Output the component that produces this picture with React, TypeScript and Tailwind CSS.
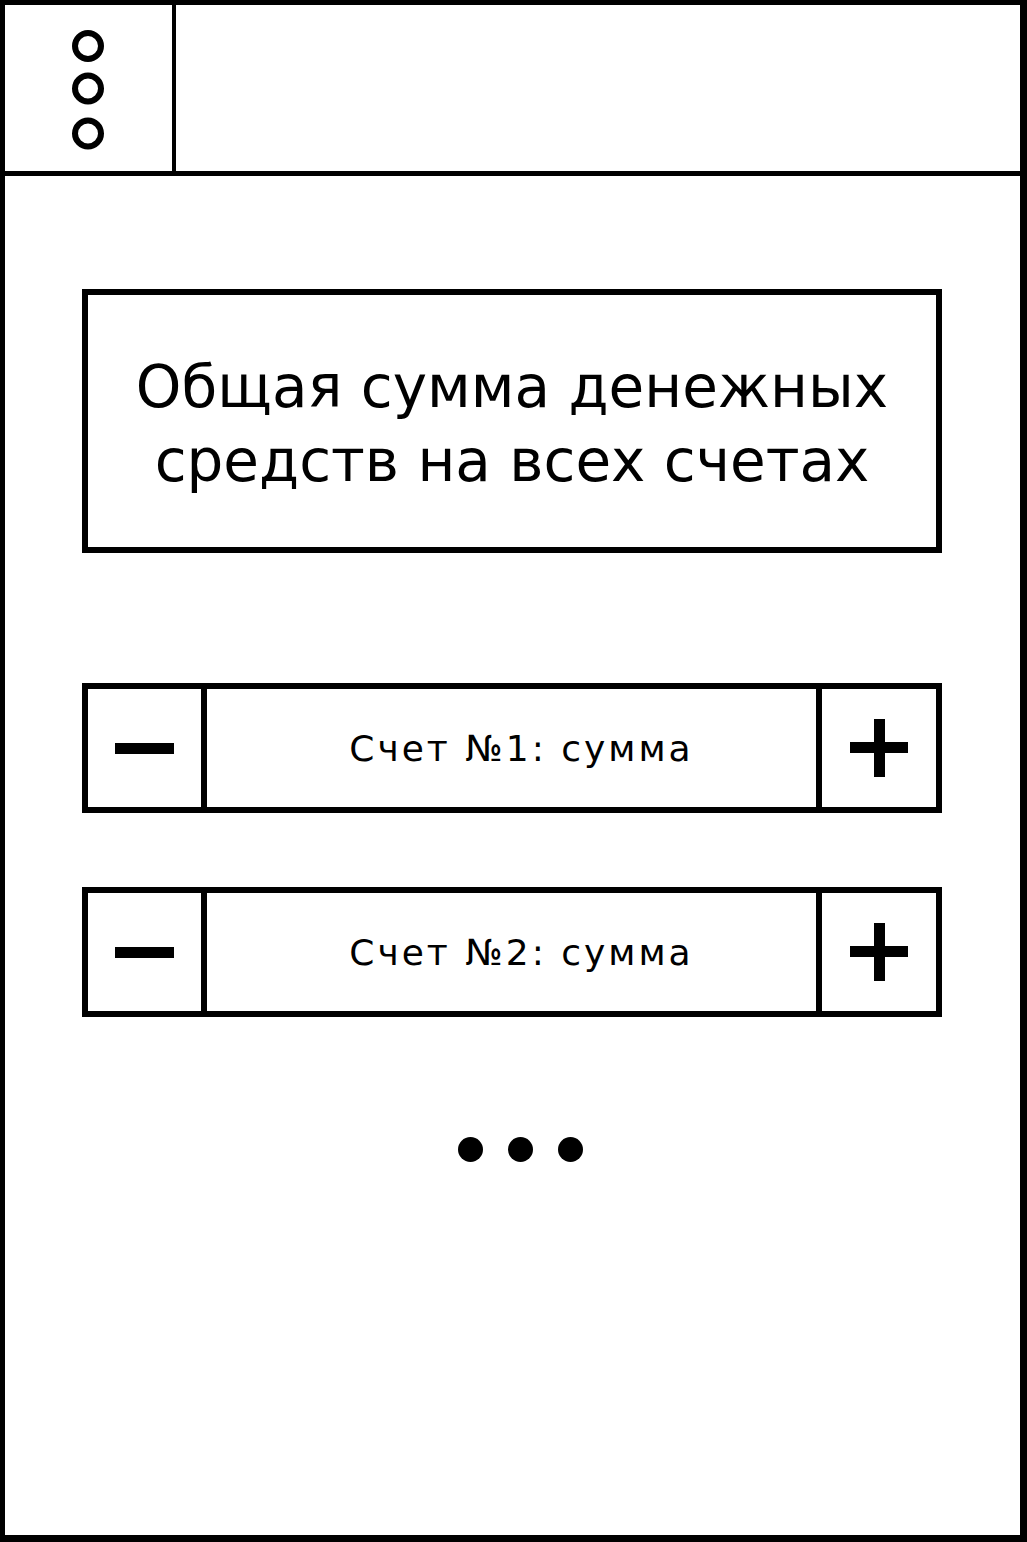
import React from "react";

const font = { fontFamily: '"DejaVu Sans", Verdana, sans-serif' };

const MenuIcon = () => (
  <svg width="34" height="122" viewBox="0 0 34 122">
    <circle cx="17" cy="17" r="13" fill="none" stroke="black" strokeWidth="6" />
    <circle cx="17" cy="59.5" r="13" fill="none" stroke="black" strokeWidth="6" />
    <circle cx="17" cy="104.5" r="13" fill="none" stroke="black" strokeWidth="6" />
  </svg>
);

const Minus = () => <div className="w-[59px] h-[11px] bg-black" />;

const Plus = () => (
  <div className="relative w-[58px] h-[58px]">
    <div className="absolute left-0 top-[23px] w-[58px] h-[11px] bg-black" />
    <div className="absolute left-[24px] top-0 w-[11px] h-[58px] bg-black" />
  </div>
);

type AccountRowProps = {
  label: string;
  className?: string;
};

const AccountRow = ({ label, className }: AccountRowProps) => (
  <div className={`flex h-[130px] w-[860px] ${className ?? ""}`}>
    <button className="flex w-[125px] shrink-0 items-center justify-center border-[6px] border-black bg-white">
      <Minus />
    </button>
    <div className="flex flex-1 items-center justify-center border-y-[6px] border-black pl-[20px] pt-[2px]">
      <span className="text-[36px] tracking-[3px] text-black" style={font}>
        {label}
      </span>
    </div>
    <button className="flex w-[126px] shrink-0 items-center justify-center border-[6px] border-black bg-white">
      <Plus />
    </button>
  </div>
);

export default function App() {
  return (
    <div className="flex h-[1542px] w-[1027px] flex-col border-[7px] border-l-[5px] border-t-[5px] border-black bg-white">
      {/* шапка */}
      <header className="flex h-[171px] shrink-0 border-b-[5px] border-black">
        <div className="flex w-[171px] items-center justify-center border-r-[4px] border-black pr-[2px] pt-[4px]">
          <MenuIcon />
        </div>
        <div className="flex-1" />
      </header>

      <main className="flex flex-1 flex-col pl-[77px]">
        <div className="mt-[113px] flex h-[264px] w-[860px] items-center justify-center border-[6px] border-black pt-[6px]">
          <p className="text-center text-[58px] leading-[74px] text-black" style={font}>
            Общая сумма денежных
            <br />
            средств на всех счетах
          </p>
        </div>

        <AccountRow label="Счет №1: сумма" className="mt-[130px]" />
        <AccountRow label="Счет №2: сумма" className="mt-[74px]" />

        <div className="mt-[120px] flex w-[860px] justify-center gap-[25px] pl-[16px]">
          <span className="h-[25px] w-[25px] rounded-full bg-black" />
          <span className="h-[25px] w-[25px] rounded-full bg-black" />
          <span className="h-[25px] w-[25px] rounded-full bg-black" />
        </div>
      </main>
    </div>
  );
}
